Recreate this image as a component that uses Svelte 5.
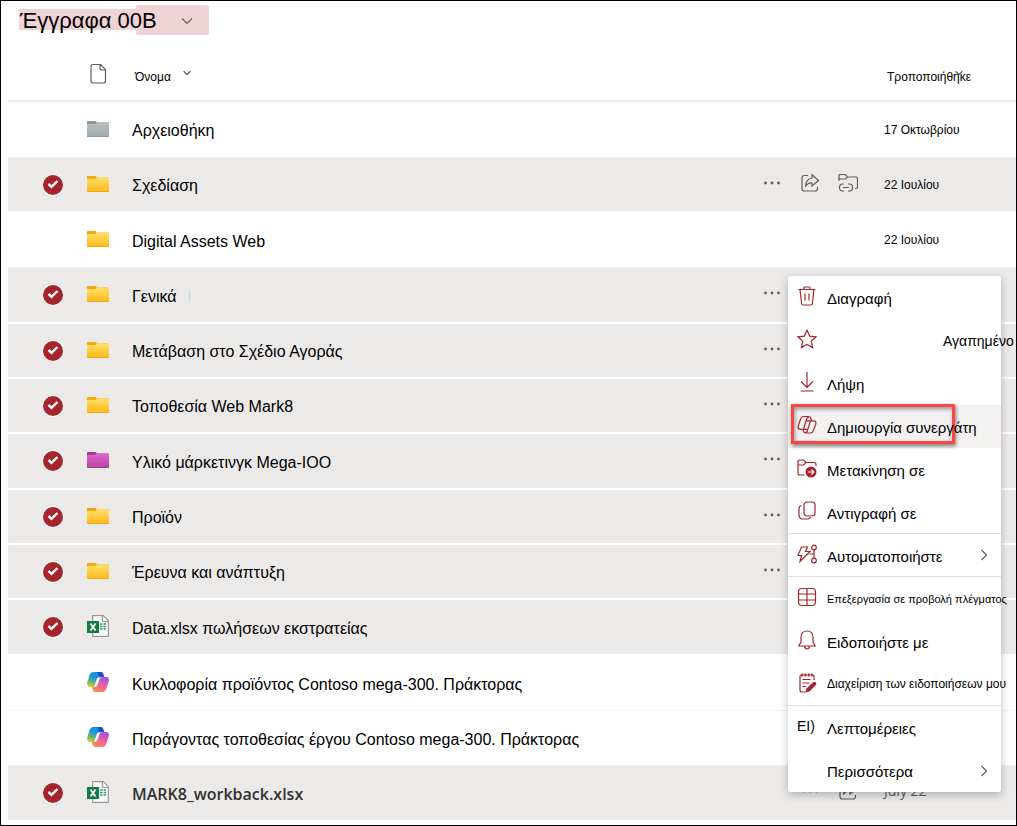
<script>
  const chosen = true;

  let files = $state([
    { name: 'Αρχειοθήκη', type: 'folder', tone: 'gray', date: '17 Οκτωβρίου' },
    { name: 'Σχεδίαση', type: 'folder', tone: 'yellow', date: '22 Ιουλίου', selected: chosen },
    { name: 'Digital Assets Web', type: 'folder', tone: 'yellow', date: '22 Ιουλίου' },
    { name: 'Γενικά', type: 'folder', tone: 'yellow', selected: chosen, caret: true },
    { name: 'Μετάβαση στο Σχέδιο Αγοράς', type: 'folder', tone: 'yellow', selected: chosen },
    { name: 'Τοποθεσία Web Mark8', type: 'folder', tone: 'yellow', selected: chosen },
    { name: 'Υλικό μάρκετινγκ Mega-ΙΟΟ', type: 'folder', tone: 'pink', selected: chosen },
    { name: 'Προϊόν', type: 'folder', tone: 'yellow', selected: chosen },
    { name: 'Έρευνα και ανάπτυξη', type: 'folder', tone: 'yellow', selected: chosen },
    { name: 'Data.xlsx πωλήσεων εκστρατείας', type: 'excel', selected: chosen },
    { name: 'Κυκλοφορία προϊόντος Contoso mega-300. Πράκτορας', type: 'copilot' },
    { name: 'Παράγοντας τοποθεσίας έργου Contoso mega-300. Πράκτορας', type: 'copilot' },
    { name: 'MARK8_workback.xlsx', type: 'excel', date: 'July 22', selected: chosen, latin: true }
  ]);

  const menu = [
    { label: 'Διαγραφή', icon: 'trash' },
    { label: 'Αγαπημένο', icon: 'star', indent: true },
    { label: 'Λήψη', icon: 'download' },
    { label: 'Δημιουργία συνεργάτη', icon: 'copilot', active: true },
    { label: 'Μετακίνηση σε', icon: 'move' },
    { label: 'Αντιγραφή σε', icon: 'copy', divider: true },
    { label: 'Αυτοματοποιήστε', icon: 'flow', more: true, divider: true },
    { label: 'Επεξεργασία σε προβολή πλέγματος', icon: 'grid', size: 'tiny' },
    { label: 'Ειδοποιήστε με', icon: 'bell' },
    { label: 'Διαχείριση των ειδοποιήσεων μου', icon: 'notes', size: 'small', divider: true },
    { label: 'Λεπτομέρειες', icon: 'text' },
    { label: 'Περισσότερα', icon: 'none', more: true }
  ];
</script>

{#snippet chevron()}
  <svg class="chevron" viewBox="0 0 12 12"><path d="M1 3.5l5 5 5-5" /></svg>
{/snippet}

{#snippet fileIcon(file)}
  {#if file.type === 'folder'}
    <svg class="file-icon" viewBox="0 0 22 22">
      <path class="tab {file.tone}" d="M0 4q0-1 1-1h7q1 0 1.500 1H22v3H0z" opacity=".5" />
      <path class="tab {file.tone}" d="M0 4q0-1 1-1h7q1 0 1.500 1v3H0z" />
      <path d="M0 6h8l2-1.500h11q1 0 1 1V18q0 1-1 1H1q-1 0-1-1z" fill="url(#folder-{file.tone})" />
      <path class="tab {file.tone}" d="M0 18h22q0 1-1 1H1q-1 0-1-1z" />
    </svg>
  {:else if file.type === 'excel'}
    <svg class="file-icon" viewBox="0 0 22 22">
      <path d="M5.700.700h10.600l5 5v15.600H5.700z" fill="#fff" stroke="#979593" stroke-width="1.200" />
      <path d="M15.500.700v5.800h5.800" fill="none" stroke="#979593" stroke-width="1.200" />
      <path d="M13 9h2.500M16.500 9H19M13 11.500h2.500M16.500 11.500H19M13 14h2.500M16.500 14H19" stroke="#21a366" stroke-width="1.300" />
      <rect y="6" width="12" height="12" fill="#107c41" />
      <path d="M3.500 8.500l5 7M8.500 8.500l-5 7" stroke="#fff" stroke-width="1.800" />
    </svg>
  {:else}
    <svg class="file-icon" viewBox="0 0 22 22">
      <path d="M6.500 1H14q1.600 0 2.200 1.700L17 6h-3.200q-1.700 0-2.300 1.700l-2.300 7.200Q8.500 17 6.500 16H2.500Q-.5 15.500.2 11.500L2.600 4Q3.500 1 6.500 1z" fill="url(#pilot-cool)" />
      <path d="M10.500 1H14q1.600 0 2.200 1.700L17 6h-3.200q-.8 0-1.500.6z" fill="#1b4fc9" />
      <path d="M15.500 21H8.200q-1.700 0-2.300-1.800L5 16h3q1.800 0 2.400-1.800l2.200-6.400q.7-1.800 2.600-1.800h4q3.200.3 2.700 4l-2.200 6.500Q18.500 21 15.500 21z" fill="url(#pilot-warm)" />
      <path d="M12.300 7.500q-.6.400-.8 1.200l-2.300 6.200Q8.800 16 8 16h-.8L9.800 8q.5-1.500 1.700-1.500h1.600z" fill="#fff" />
    </svg>
  {/if}
{/snippet}

{#snippet shareIcon()}
  <svg viewBox="0 0 20 20"><path d="M8 2.500H4.500q-2.500 0-2.500 2.500v10.500q0 2.500 2.500 2.500H15q2.500 0 2.500-2.500V14M12 1.800l6.500 5.700L12 13v-3Q8 9.500 5.500 13.500 6 6 12 5z" /></svg>
{/snippet}

{#snippet menuIcon(name)}
  {#if name === 'text'}
    <span class="glyph">ΕΙ)</span>
  {:else}
    <svg class="menu-icon" viewBox="0 0 20 20">
      {#if name === 'trash'}
        <path d="M1.500 3.500h17M7 3.500V2q0-1 1-1h4q1 0 1 1v1.500M3 3.500l1.600 14q.2 1.500 1.700 1.500h7.400q1.500 0 1.700-1.500L17 3.500M8 7.500v7M12 7.500v7" />
      {:else if name === 'star'}
        <path d="M10 1.200l2.700 5.900 6.300.7-4.700 4.300 1.300 6.500L10 15.400l-5.600 3.200 1.300-6.500L1 7.800l6.300-.7z" />
      {:else if name === 'download'}
        <path d="M10 0v15M4 9.500l6 6 6-6M3.500 19h13" />
      {:else if name === 'copilot'}
        <path d="M6.500 1.500h5.200q1.700 0 2.100 1.500l.7 2.800M6.500 1.500q-2 0-2.700 2.100L1.300 10.500q-1 3.800 2.200 3.800h3l2.800-9.400q1-3.400 3.400-3.400M13.500 18H8.800Q7 18 6.500 16.300L6 14.300M13.500 18q2 0 2.700-2.100l2.500-6.500q1-3.600-2.200-3.600h-3l-2.900 9.300Q9.800 18 7.800 18M9 5.800h4.500M6.500 14.300h4.300" />
      {:else if name === 'move'}
        <path d="M7.500 17H3q-2 0-2-2V4q0-2 2-2h3.500l2.500 2.500h8q2 0 2 2V8M1 7h5.500L9 4.500" />
        <circle class="solid" cx="14" cy="14" r="5.500" />
        <path class="light" d="M11 14h5.500M14.500 11.500l2.300 2.500-2.300 2.500" />
      {:else if name === 'copy'}
        <rect x="7" y="1" width="11" height="14" rx="3" />
        <path d="M4.500 4.500Q2 5 2 7.500V14q0 4 4 4h4.500q2.500 0 3-2" />
      {:else if name === 'flow'}
        <path d="M4.500 3h6L8.500 7.500H13L3 17.500l1.500-6H1zM12.500 10H17M17 6v8" />
        <circle cx="17" cy="3.500" r="2.300" />
        <circle cx="17" cy="16.500" r="2.300" />
      {:else if name === 'grid'}
        <rect x="1.500" y="1.500" width="17" height="17" rx="3.500" />
        <path d="M1.500 7h17M1.500 13h17M10 1.500v17" />
      {:else if name === 'bell'}
        <path d="M10 1Q4 1 4 7.500V12l-2.200 4h16.400L16 12V7.500Q16 1 10 1zM7.500 16q.3 3 2.500 3t2.500-3" />
      {:else if name === 'notes'}
        <path d="M17 7V3.500q0-1.500-1.500-1.500h-11Q3 2 3 3.500V17q0 2 2 2h3.500M5.500 6.500h8M5.500 10h7M5.500 13.500H9" />
        <path class="thick" d="M5 .5v3M8.300.5v3M11.700.5v3M15 .5v3" />
        <path class="solid" d="M8.500 19.500l1-4 6.500-6.300q1.500-1 2.700.2t.2 2.700L12.500 18.500z" />
      {/if}
    </svg>
  {/if}
{/snippet}

<svg class="defs" aria-hidden="true">
  <linearGradient id="folder-yellow" x2="0" y2="1"><stop stop-color="#ffe066" /><stop offset="1" stop-color="#ffb81c" /></linearGradient>
  <linearGradient id="folder-gray" x2="0" y2="1"><stop stop-color="#b8c0c2" /><stop offset="1" stop-color="#a0a9ac" /></linearGradient>
  <linearGradient id="folder-pink" x2="0" y2="1"><stop stop-color="#e066cf" /><stop offset="1" stop-color="#b9459f" /></linearGradient>
  <linearGradient id="pilot-cool" x1=".6" x2=".3" y2="1"><stop stop-color="#1c8fea" /><stop offset=".35" stop-color="#1a93d8" /><stop offset=".7" stop-color="#63b67a" /><stop offset="1" stop-color="#f0c81c" /></linearGradient>
  <linearGradient id="pilot-warm" x1=".7" x2=".3" y2="1"><stop stop-color="#9a52e8" /><stop offset=".5" stop-color="#ee5fa0" /><stop offset="1" stop-color="#ff8a4c" /></linearGradient>
</svg>

<main>
  <h1>
    <button class="view">Έγγραφα 00Β {@render chevron()}</button>
  </h1>

  <table>
    <thead>
      <tr>
        <th class="pick"></th>
        <th class="kind">
          <svg class="page-icon" viewBox="0 0 22 22"><path d="M6 1.500h7.500l5 5V18q0 2-2 2H6q-2 0-2-2V3.500q0-2 2-2zM13 1.500V5q0 2 2 2h3.500" /></svg>
        </th>
        <th class="name"><button class="sort">Όνομα {@render chevron()}</button></th>
        <th class="actions"></th>
        <th class="date"><button class="sort overlap">Τροποποιήθηκε {@render chevron()}</button></th>
      </tr>
    </thead>
    <tbody>
      {#each files as file}
        <tr class:selected={file.selected}>
          <td class="pick">
            <label>
              <input type="checkbox" aria-label={file.name} bind:checked={file.selected} />
              <svg viewBox="0 0 20 20"><path d="M5.500 9l3 2.800L14.500 6" /></svg>
            </label>
          </td>
          <td class="kind">{@render fileIcon(file)}</td>
          <td class="name">
            <a href="#file" class:latin={file.latin}>{file.name}</a>
            {#if file.caret}<span class="caret"></span>{/if}
          </td>
          <td class="actions">
            {#if file.selected}
              <div>
                <button aria-label="Περισσότερα">
                  <svg viewBox="0 0 20 20"><g class="dots"><circle cx="3.500" cy="10" r="1.400" /><circle cx="10" cy="10" r="1.400" /><circle cx="16.500" cy="10" r="1.400" /></g></svg>
                </button>
                <button aria-label="Κοινή χρήση">{@render shareIcon()}</button>
                {#if file.type === 'folder'}
                  <button aria-label="Σύνδεσμος">
                    <svg viewBox="0 0 20 20"><path d="M1 8V2.500Q1 1.500 2 1.500h5l2.500 2.500H18q1.500 0 1.500 1.500V14q0 1.500-1.500 1.500h-1M1 6h6.500l2-2M6 11H4.500q-3 0-3 3.500t3 3.500H6M10 11h1.500q3 0 3 3.500t-3 3.500H10M5 14.500h6" /></svg>
                  </button>
                {/if}
              </div>
            {/if}
          </td>
          <td class="date" class:latin={file.latin}>{file.date ?? ''}</td>
        </tr>
      {/each}
    </tbody>
  </table>

  <div class="menu" role="menu">
    {#each menu as item}
      <button role="menuitem" class={item.size} class:active={item.active} class:divider={item.divider} class:indent={item.indent}>
        <span class="slot">{@render menuIcon(item.icon)}</span>
        <span class="label">{item.label}</span>
        {#if item.more}{@render chevron()}{/if}
      </button>
    {/each}
  </div>
</main>

<style>
  :global(body) {
    margin: 0;
    background: #fff;
  }

  main {
    position: relative;
    box-sizing: border-box;
    min-height: 100vh;
    padding-left: 7px;
    border: 1px solid #000;
    overflow: hidden;
    color: #000;
    font: 16px/20px "Liberation Sans", Arial, sans-serif;
  }

  button {
    padding: 0;
    border: 0;
    background: none;
    color: inherit;
    font: inherit;
    text-align: left;
    white-space: nowrap;
    cursor: pointer;
  }

  svg {
    display: block;
    fill: none;
    stroke: #605e5c;
    stroke-width: 1.2;
  }

  .defs {
    position: absolute;
    width: 0;
    height: 0;
  }

  .chevron {
    width: 12px;
    height: 12px;
  }

  h1 {
    margin: 4px 0 0 11px;
    font-weight: 400;
  }

  .view {
    position: relative;
    z-index: 0;
    display: flex;
    align-items: center;
    gap: 24px;
    box-sizing: border-box;
    height: 30px;
    padding: 2px 16px 0 1px;
    font-size: 22px;
  }

  .view::before,
  .view::after {
    content: "";
    position: absolute;
    z-index: -1;
    background: #efd3d5;
  }

  .view::before {
    inset: 4px 73px 5px 0;
  }

  .view::after {
    top: 0;
    right: 0;
    width: 73px;
    height: 30px;
    border-radius: 2px;
  }

  table {
    width: 100%;
    margin-top: 12px;
    table-layout: fixed;
    border-collapse: separate;
    border-spacing: 0;
  }

  th,
  td {
    padding: 0;
    font-weight: 400;
    text-align: left;
    vertical-align: middle;
  }

  th {
    height: 53px;
    border-bottom: 2px solid #edebe9;
    font-size: 12px;
  }

  td {
    box-sizing: border-box;
    height: 55px;
    border-bottom: 1px solid #f3f2f1;
  }

  tbody tr:nth-child(3n + 1) td {
    height: 56px;
  }

  .selected td {
    border-bottom: 2px solid #fff;
    background: #ebeae9;
  }

  .pick {
    width: 79px;
  }

  .pick label {
    display: block;
    position: relative;
    width: 20px;
    height: 20px;
    margin-left: 35px;
  }

  .pick input {
    width: 20px;
    height: 20px;
    margin: 0;
    border-radius: 50%;
    appearance: none;
    display: block;
  }

  .pick input:checked {
    background: #a4262c;
    box-shadow: 0 0 0 1px #f8f5f5;
  }

  .pick svg {
    position: absolute;
    inset: 0;
    stroke: #fff;
    stroke-width: 2.4;
    pointer-events: none;
  }

  .kind {
    width: 45px;
  }

  td.kind {
    padding-bottom: 2px;
  }

  .file-icon {
    width: 22px;
    height: 22px;
    stroke: none;
  }

  .page-icon {
    width: 22px;
    height: 22px;
  }

  .tab.yellow {
    fill: #eeaa10;
  }

  .tab.gray {
    fill: #8b9799;
  }

  .tab.pink {
    fill: #a53b8d;
  }

  .name a {
    color: inherit;
    text-decoration: none;
  }

  td.name {
    padding-top: 3px;
    white-space: nowrap;
  }

  .name a.latin {
    color: #323130;
    font-family: "Open Sans", sans-serif;
    font-weight: 600;
  }

  .caret {
    display: inline-block;
    height: 12px;
    margin-left: 8px;
    border-left: 1px solid #a5e8ea;
  }

  .sort {
    display: flex;
    align-items: center;
    gap: 12px;
    margin-left: 3px;
    padding-top: 7px;
  }

  .sort .chevron {
    width: 8px;
    height: 8px;
    margin-bottom: 8px;
    stroke-width: 2;
  }

  .sort.overlap {
    gap: 0;
  }

  .sort.overlap .chevron {
    margin-left: -16px;
  }

  .actions {
    width: 131px;
  }

  .actions div {
    display: flex;
    justify-content: flex-end;
    padding: 0 17px 4px 0;
  }

  .actions button {
    display: flex;
    justify-content: center;
    width: 38px;
  }

  .actions svg {
    width: 20px;
    height: 20px;
  }

  .dots {
    fill: #605e5c;
    stroke: none;
  }

  .date {
    width: 132px;
    font-size: 12px;
  }

  td.date.latin {
    padding-bottom: 4px;
    color: #605e5c;
    font-family: "Open Sans", sans-serif;
    font-size: 14px;
  }

  .menu {
    position: absolute;
    top: 275px;
    right: 15px;
    width: 213px;
    border-radius: 2px;
    background: #fff;
    box-shadow: 0 3px 8px rgba(0, 0, 0, 0.25);
    font-size: 15px;
  }

  .menu button {
    position: relative;
    display: flex;
    align-items: center;
    box-sizing: border-box;
    width: 100%;
    height: 43px;
    padding: 0 11px 0 9px;
  }

  .menu .divider {
    border-bottom: 1px solid #e1dfdd;
  }

  .menu .active {
    background: #f3f2f1;
  }

  .active::before {
    content: "";
    position: absolute;
    inset: -1px 46px 4px 3px;
    border: 3px solid #fb4545;
    box-shadow: 1px 2px 4px rgba(0, 0, 0, 0.5), inset 1px 2px 4px rgba(0, 0, 0, 0.4);
  }

  .slot {
    flex: none;
    width: 30px;
    padding-bottom: 3px;
  }

  .glyph {
    font-size: 14px;
  }

  .label {
    position: relative;
    flex: 1;
    min-width: 0;
    padding-top: 3px;
  }

  .small .label {
    padding-top: 0;
    font-size: 12px;
  }

  .tiny .label {
    padding-top: 0;
    font-size: 11px;
  }

  .indent .label {
    padding: 0 0 0 116px;
    font-size: 14px;
  }

  .menu-icon {
    width: 20px;
    height: 20px;
    stroke: #a4262c;
  }

  .menu-icon .solid {
    fill: #a4262c;
    stroke: none;
  }

  .menu-icon .light {
    stroke: #fff;
  }

  .menu-icon .thick {
    stroke-width: 1.6;
  }

  .menu .chevron {
    transform: rotate(-90deg);
  }
</style>
